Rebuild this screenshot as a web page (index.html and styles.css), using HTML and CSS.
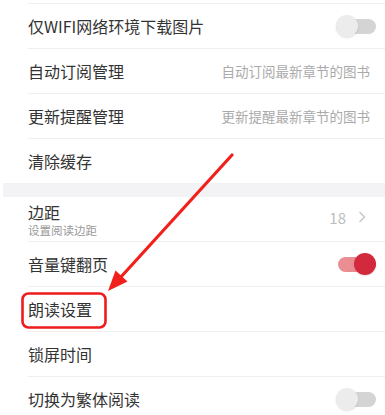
FILE: index.html
```html
<!DOCTYPE html>
<html lang="zh-CN">
<head>
    <meta charset="UTF-8">
    <meta name="viewport" content="width=device-width, initial-scale=1.0">
    <title>阅读设置</title>
    <link rel="stylesheet" href="styles.css">
</head>
<body>
    <div class="shezhi">
        <ul class="liebiao liebiao-shang">
            <li class="hang">
                <span class="biaoti">仅WIFI网络环境下载图片</span>
                <span class="kaiguan"></span>
            </li>
            <li class="hang">
                <span class="biaoti">自动订阅管理</span>
                <span class="shuoming">自动订阅最新章节的图书</span>
            </li>
            <li class="hang">
                <span class="biaoti">更新提醒管理</span>
                <span class="shuoming">更新提醒最新章节的图书</span>
            </li>
            <li class="hang wu-xian">
                <span class="biaoti">清除缓存</span>
            </li>
        </ul>

        <div class="fenge"></div>

        <ul class="liebiao">
            <li class="hang">
                <div class="shuang">
                    <span class="biaoti">边距</span>
                    <span class="fubiaoti">设置阅读边距</span>
                </div>
                <span class="zhi">18 <svg class="jiantou" width="8" height="12" viewBox="0 0 8 12"><path d="M1.5 1 L6.5 6 L1.5 11" fill="none" stroke="#c4c4c4" stroke-width="1.3"/></svg></span>
            </li>
            <li class="hang">
                <span class="biaoti">音量键翻页</span>
                <span class="kaiguan kai"></span>
            </li>
            <li class="hang">
                <span class="biaoti">朗读设置</span>
            </li>
            <li class="hang">
                <span class="biaoti">锁屏时间</span>
            </li>
            <li class="hang wu-xian">
                <span class="biaoti">切换为繁体阅读</span>
                <span class="kaiguan"></span>
            </li>
        </ul>
    </div>

    <svg class="biaozhu" width="385" height="415" viewBox="0 0 385 415">
        <line x1="232" y1="155" x2="120" y2="278" stroke="#f2201c" stroke-width="3.2" stroke-linecap="round"/>
        <polygon points="108,291 127.5,281.5 115.5,270.5" fill="#f2201c"/>
        <rect x="22.5" y="293.5" width="83" height="34" rx="6" ry="6" fill="none" stroke="#ee1c1c" stroke-width="2.6"/>
    </svg>
</body>
</html>
```

FILE: styles.css
```css
* {
    box-sizing: border-box;
    margin: 0;
    padding: 0;
}

body {
    width: 385px;
    height: 415px;
    overflow: hidden;
    background: #fff;
    font-family: "Noto Sans CJK SC", "Noto Sans", sans-serif;
    color: #333;
    position: relative;
}

.shezhi {
    padding-top: 3px;
}

.liebiao {
    list-style: none;
    padding-left: 28px;
}

.liebiao-shang {
    border-top: 1px solid #f0f0f0;
    margin-left: 28px;
    padding-left: 0;
}

.hang {
    height: 45px;
    display: flex;
    align-items: center;
    justify-content: space-between;
    padding-right: 9px;
    border-bottom: 1px solid #efefef;
}

.hang.wu-xian {
    border-bottom: none;
    height: 44px;
}

.biaoti {
    font-size: 16px;
    line-height: 20px;
    color: #333;
}

.shuoming {
    font-size: 13.5px;
    color: #aaa;
    margin-right: 6px;
}

.shuang {
    display: flex;
    flex-direction: column;
    padding-top: 2px;
}

.fubiaoti {
    font-size: 11.5px;
    line-height: 16px;
    color: #999;
}

.zhi {
    display: flex;
    align-items: center;
    gap: 12px;
    font-size: 15px;
    color: #bdbdbd;
    margin-right: 10px;
    margin-top: -4px;
}

.fenge {
    height: 14px;
    margin-left: 3px;
    background: #f3f3f5;
}

.kaiguan {
    position: relative;
    width: 40px;
    height: 15px;
    border-radius: 8px;
    background: #d4d4d4;
}

.kaiguan::after {
    content: "";
    position: absolute;
    left: 0;
    top: -4px;
    width: 22px;
    height: 22px;
    border-radius: 50%;
    background: #ececec;
    box-shadow: 0 1px 2px rgba(0, 0, 0, 0.12);
}

.kaiguan.kai {
    width: 38px;
    background: #eb8e93;
}

.kaiguan.kai::after {
    left: auto;
    right: 0;
    background: #d22a3c;
}

.biaozhu {
    position: absolute;
    left: 0;
    top: 0;
    pointer-events: none;
}
```
